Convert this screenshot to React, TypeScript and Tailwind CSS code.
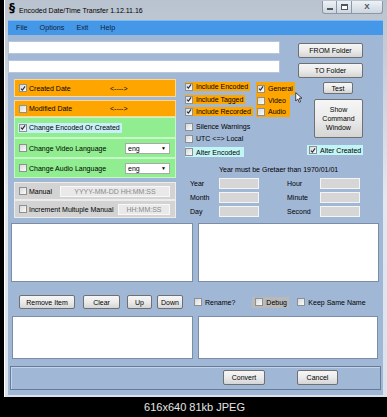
import React from "react";

function Box({ checked = false }: { checked?: boolean }) {
  return (
    <span className="flex h-[8px] w-[8px] shrink-0 items-center justify-center border border-[#8e8f8f] bg-gradient-to-br from-[#d6d9dc] to-[#fbfbfb]">
      {checked && (
        <svg viewBox="0 0 8 8" className="h-[7px] w-[7px]">
          <path d="M1.3 4.2 L3.2 6.2 L6.8 1.2" stroke="#1f2b46" strokeWidth="1.5" fill="none" />
        </svg>
      )}
    </span>
  );
}

function Check({
  label,
  checked = false,
  className = "",
}: {
  label: string;
  checked?: boolean;
  className?: string;
}) {
  return (
    <div className={`flex h-[9px] w-fit items-center pr-[2px] ${className}`}>
      <Box checked={checked} />
      <span className="ml-[3px] whitespace-nowrap">{label}</span>
    </div>
  );
}

function Btn({ children, className = "" }: { children: React.ReactNode; className?: string }) {
  return (
    <button
      type="button"
      className={`flex shrink-0 items-center justify-center rounded-[2px] border border-[#707070] bg-gradient-to-b from-[#f6f6f6] via-[#ebebeb] to-[#d5d5d5] text-center leading-[9px] whitespace-nowrap text-black ${className}`}
    >
      {children}
    </button>
  );
}

function DateField() {
  return <div className="h-[11px] w-[40px] border border-[#f4f4f4] bg-[#d6d6d6]" />;
}

function ListBox({ className = "" }: { className?: string }) {
  return <div className={`shrink-0 border border-[#7a8ca6] bg-white ${className}`} />;
}

export default function App() {
  return (
    <div className="h-[417px] w-[387px] overflow-hidden bg-black font-['Liberation_Sans',Arial,sans-serif] text-[7px] leading-none text-black">
      <div className="ml-[4px] flex h-[397px] w-[383px] flex-col border-l border-white bg-gradient-to-b from-[#b9c3cf] via-[#e3e8ee] to-[#d9e1ea] pr-[4px] pl-[3px]">
        {/* title bar */}
        <div className="flex h-[20px] shrink-0 items-start">
          <span className="mt-[2px] ml-[1px] font-['DejaVu_Sans',sans-serif] text-[12px] font-bold leading-none">§</span>
          <span className="mt-[7px] ml-[4px] whitespace-nowrap text-[7px]">Encoded Date/Time Transfer 1.12.11.16</span>
          <div className="mt-[1px] ml-auto flex h-[13px] overflow-hidden rounded-b-[3px] border border-t-0 border-[#8c97a6] bg-gradient-to-b from-[#eef2f6] to-[#cdd5df]">
            <div className="flex w-[14px] items-center justify-center border-r border-[#8c97a6]">
              <span className="mt-[3px] h-[2px] w-[6px] border border-[#4d5561] bg-white" />
            </div>
            <div className="flex w-[15px] items-center justify-center border-r border-[#8c97a6]">
              <span className="h-[6px] w-[7px] border border-[#4d5561] border-t-2 bg-white" />
            </div>
            <div className="flex w-[30px] items-center justify-center text-[8px] font-bold text-[#4d5561]">X</div>
          </div>
        </div>

        {/* menu */}
        <div className="flex h-[15px] shrink-0 items-center gap-[12px] border-t border-[#7fbaf2] bg-[#4598e8] pl-[8px] text-[7.2px] text-[#10233d]">
          <span>File</span>
          <span>Options</span>
          <span>Exit</span>
          <span>Help</span>
        </div>

        {/* client */}
        <div className="flex h-[360px] shrink-0 flex-col bg-[#a0b7d6]">
          {/* paths + folder buttons */}
          <div className="mt-[6px] flex h-[37px]">
            <div className="flex w-[272px] flex-col gap-[6px]">
              <div className="h-[13px] border border-[#b8c6d8] bg-white" />
              <div className="h-[13px] border border-[#b8c6d8] bg-white" />
            </div>
            <div className="mt-[2px] ml-[18px] flex flex-col gap-[5px]">
              <Btn className="h-[15px] w-[65px]">FROM Folder</Btn>
              <Btn className="h-[15px] w-[65px]">TO Folder</Btn>
            </div>
          </div>

          {/* options area */}
          <div className="mt-[1px] flex pl-[6px]">
            {/* left panels */}
            <div className="flex w-[162px] flex-col">
              <div className="flex h-[18px] items-center border border-[#ffd68f] bg-[#ffa500] pl-[4px]">
                <Box checked />
                <span className="ml-[2px] w-[81px]">Created Date</span>
                <span>{"<---->"}</span>
              </div>
              <div className="mt-[3px] flex h-[17px] items-center border border-[#ffd68f] bg-[#ffa500] pl-[4px]">
                <Box />
                <span className="ml-[2px] w-[81px]">Modified Date</span>
                <span>{"<---->"}</span>
              </div>
              <div className="flex h-[21px] items-center border border-[#c6f7c6] bg-[#90ee90] pl-[3px]">
                <div className="flex h-[10px] items-center bg-[#c9eff8] pr-[2px] pl-[1px]">
                  <Box checked />
                  <span className="ml-[2px] whitespace-nowrap">Change Encoded Or Created</span>
                </div>
              </div>
              <div className="flex h-[20px] items-center border border-[#c6f7c6] bg-[#90ee90] pl-[4px]">
                <Box />
                <span className="ml-[2px] w-[96px] whitespace-nowrap">Change Video Language</span>
                <div className="flex h-[11px] w-[45px] items-center border border-[#a9a9a9] bg-white pr-[3px] pl-[2px]">
                  <span>eng</span>
                  <span className="ml-auto text-[5px]">▼</span>
                </div>
              </div>
              <div className="flex h-[20px] items-center border border-[#c6f7c6] bg-[#90ee90] pl-[4px]">
                <Box />
                <span className="ml-[2px] w-[96px] whitespace-nowrap">Change Audio Language</span>
                <div className="flex h-[11px] w-[45px] items-center border border-[#a9a9a9] bg-white pr-[3px] pl-[2px]">
                  <span>eng</span>
                  <span className="ml-auto text-[5px]">▼</span>
                </div>
              </div>
              <div className="mt-[4px] flex h-[18px] items-center border border-[#ececec] bg-[#d3d3d3] pl-[4px]">
                <Box />
                <span className="ml-[2px] w-[31px]">Manual</span>
                <div className="flex h-[11px] w-[110px] items-center justify-center border border-[#f8f8f8] bg-[#e9e9e9] whitespace-nowrap text-[#8a8a8a]">
                  YYYY-MM-DD HH:MM:SS
                </div>
              </div>
              <div className="flex h-[18px] items-center border border-[#ececec] bg-[#d3d3d3] pl-[4px]">
                <Box />
                <span className="ml-[2px] w-[89px] whitespace-nowrap">Increment Multuple Manual</span>
                <div className="flex h-[11px] w-[52px] items-center justify-center border border-[#f8f8f8] bg-[#e9e9e9] whitespace-nowrap text-[#8a8a8a]">
                  HH:MM:SS
                </div>
              </div>
            </div>

            {/* right side */}
            <div className="ml-[9px] flex flex-col">
              <div className="flex h-[84px]">
                <div className="flex w-[71px] flex-col pt-[3px]">
                  <Check checked label="Include Encoded" className="bg-[#ffa500]" />
                  <Check checked label="Include Tagged" className="mt-[4px] bg-[#ffa500]" />
                  <Check checked label="Include Recorded" className="mt-[3px] bg-[#ffa500]" />
                  <Check label="Silence Warnings" className="mt-[6px]" />
                  <Check label="UTC  <=> Local" className="mt-[3px]" />
                  <Check label="Alter Encoded" className="mt-[4px] h-[10px] bg-[#c2f5f5] pr-[4px]" />
                </div>
                <div className="flex w-[51px] flex-col pt-[3px]">
                  <div className="flex h-[13px] w-[39px] items-center bg-[#ffa500] pl-[1px]">
                    <Box checked />
                    <span className="ml-[3px]">General</span>
                  </div>
                  <div className="flex h-[11px] w-[34px] items-center bg-[#ffa500] pl-[1px]">
                    <Box />
                    <span className="ml-[3px]">Video</span>
                  </div>
                  <div className="flex h-[11px] w-[34px] items-center bg-[#ffa500] pl-[1px]">
                    <Box />
                    <span className="ml-[3px]">Audio</span>
                  </div>
                </div>
                <div className="relative flex w-[56px] flex-col pt-[3px]">
                  <svg viewBox="0 0 10 16" className="absolute top-[13px] -left-[12px] h-[11px] w-[7px]">
                    <path d="M1 1 L1 13 L4 10 L6 15 L8 14 L6 9 L10 9 Z" fill="white" stroke="black" strokeWidth="1" />
                  </svg>
                  <Btn className="ml-[16px] h-[12px] w-[30px]">Test</Btn>
                  <Btn className="mt-[5px] ml-[7px] h-[39px] w-[49px] leading-[9px]">
                    Show
                    <br />
                    Command
                    <br />
                    Window
                  </Btn>
                  <Check checked label="Alter Created" className="mt-[7px] h-[10px] w-[55px] bg-[#c2f5f5] pl-[2px]" />
                </div>
              </div>
              <div className="flex h-[12px] items-center pl-[34px]">Year must be Gretaer than 1970/01/01</div>
              <div className="mt-[3px] flex flex-col gap-[3px] pl-[5px]">
                {[
                  ["Year", "Hour"],
                  ["Month", "Minute"],
                  ["Day", "Second"],
                ].map(([a, b]) => (
                  <div key={a} className="flex h-[11px] items-center">
                    <span className="w-[29px]">{a}</span>
                    <DateField />
                    <span className="ml-[28px] w-[33px]">{b}</span>
                    <DateField />
                  </div>
                ))}
              </div>
            </div>
          </div>

          {/* lists */}
          <div className="mt-[5px] ml-[3px] flex gap-[5px]">
            <ListBox className="h-[59px] w-[182px]" />
            <ListBox className="h-[59px] w-[181px]" />
          </div>

          <div className="mt-[13px] ml-[11px] flex h-[14px] items-center">
            <Btn className="h-[14px] w-[56px]">Remove Item</Btn>
            <Btn className="ml-[8px] h-[14px] w-[37px]">Clear</Btn>
            <Btn className="ml-[7px] h-[14px] w-[25px]">Up</Btn>
            <Btn className="ml-[5px] h-[14px] w-[26px]">Down</Btn>
            <Check label="Rename?" className="ml-[11px]" />
            <div className="ml-[15px] flex h-[11px] w-[37px] items-center bg-[#b9b9b9] pl-[3px]">
              <Box />
              <span className="ml-[3px]">Debug</span>
            </div>
            <Check label="Keep Same Name" className="ml-[8px]" />
          </div>

          <div className="mt-[7px] ml-[4px] flex gap-[5px]">
            <ListBox className="h-[43px] w-[181px]" />
            <ListBox className="h-[43px] w-[180px]" />
          </div>

          <div className="mt-[7px] ml-[2px] flex h-[24px] w-[371px] items-start border border-[#667b99] pt-[3px] pl-[212px] shadow-[inset_1px_1px_0_#c4d3e6]">
            <Btn className="h-[15px] w-[42px]">Convert</Btn>
            <Btn className="ml-[32px] h-[15px] w-[41px]">Cancel</Btn>
          </div>
        </div>
      </div>
      <div className="flex h-[20px] items-center justify-center pl-[2px] text-[11px] text-[#e6e6e6]">616x640 81kb JPEG</div>
    </div>
  );
}
